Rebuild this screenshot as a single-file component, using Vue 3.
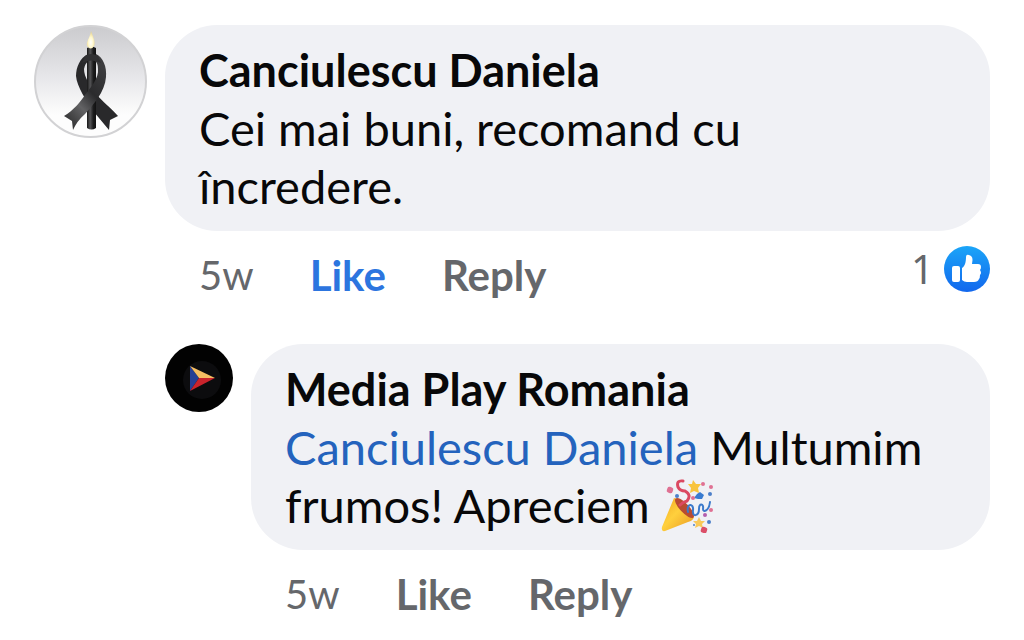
<script setup>
const first = { name: 'Canciulescu Daniela', age: '5w' }
const reply = { name: 'Media Play Romania', age: '5w' }
</script>

<template>
  <main class="thread">
    <article class="comment">
      <svg class="avatar" viewBox="0 0 113 113" role="img" aria-label="Canciulescu Daniela">
        <defs>
          <linearGradient id="backdrop" x1="0" y1="0" x2="0" y2="1">
            <stop offset="0" stop-color="#cbcbce" />
            <stop offset=".45" stop-color="#e6e6e9" />
            <stop offset=".8" stop-color="#fdfdfd" />
          </linearGradient>
          <linearGradient id="ribbon" x1="0" y1="1" x2=".6" y2="0">
            <stop offset="0" stop-color="#222" />
            <stop offset=".4" stop-color="#626264" />
            <stop offset=".65" stop-color="#2b2b2d" />
            <stop offset="1" stop-color="#3c3c3e" />
          </linearGradient>
          <linearGradient id="candle">
            <stop offset="0" stop-color="#161616" />
            <stop offset=".35" stop-color="#555557" />
            <stop offset=".7" stop-color="#1c1c1d" />
            <stop offset="1" stop-color="#111" />
          </linearGradient>
          <radialGradient id="flame" cx=".5" cy=".65" r=".6">
            <stop offset="0" stop-color="#fff" />
            <stop offset=".5" stop-color="#fff8cf" />
            <stop offset="1" stop-color="#e8d48b" />
          </radialGradient>
        </defs>
        <circle cx="56.500" cy="56.500" r="55.500" fill="url(#backdrop)" stroke="#d2d2d4" stroke-width="2" />
        <path d="M54 29C46 33 42 42 42 51C43 62 52 75 60 87L75 105L76 95L84 91C76 82 68 76 63 70C56 61 50 52 50 44Q51 38 55 36Z" fill="#29292b" />
        <path d="M53 23Q57.500 20 62 23V103Q57.500 106 53 103Z" fill="url(#candle)" />
        <path d="M62 29C69 32 73 42 72 52C71 67 59 80 51 89Q43 96 39 105L38 96L30 91C40 85 46 77 51 70C57 62 65 53 64 44Q64 38 61 36Z" fill="url(#ribbon)" />
        <path d="M51 31Q57 27 64 31L67 38Q57 33 48 38Z" fill="#303032" />
        <path d="M57 6C59 12 62 17 60 21Q57 26 53 21C52 16 56 13 57 6Z" fill="url(#flame)" />
      </svg>
      <div class="body">
        <div class="bubble">
          <h2>{{ first.name }}</h2>
          <p>Cei mai buni, recomand cu încredere.</p>
        </div>
        <footer class="actions">
          <time>{{ first.age }}</time>
          <button type="button" class="liked">Like</button>
          <button type="button">Reply</button>
          <span class="reactions">
            <span>1</span>
            <svg class="thumb" viewBox="0 0 46 46" role="img" aria-label="Like">
              <defs>
                <linearGradient id="blue" x1="0" y1="0" x2="0" y2="1">
                  <stop offset="0" stop-color="#1ba5f8" />
                  <stop offset="1" stop-color="#1267ed" />
                </linearGradient>
              </defs>
              <circle cx="23" cy="23" r="23" fill="url(#blue)" />
              <rect x="8" y="20" width="8" height="16" rx="2" fill="#fff" />
              <path d="M18 22C21 20 22 16 22 11Q22 8 25 9Q30 10 28 18H34Q37 18 37 21Q37 23 36 24Q38 27 36 29Q36 32 35 33Q34 36 30 36H23Q20 36 18 34Z" fill="#fff" />
            </svg>
          </span>
        </footer>
      </div>
    </article>

    <article class="comment nested">
      <svg class="avatar small" viewBox="0 0 68 68" role="img" aria-label="Media Play Romania">
        <circle cx="34" cy="34" r="34" fill="#020202" />
        <circle cx="37" cy="36" r="19" fill="#0c0c0e" />
        <path d="M25 22L34 34L25 47Z" fill="#263f94" />
        <path d="M25 22L50 34H34Z" fill="#f6bd62" />
        <path d="M34 34H50L25 47Z" fill="#c9232c" />
      </svg>
      <div class="body">
        <div class="bubble">
          <h2>{{ reply.name }}</h2>
          <p>
            <a href="#">Canciulescu Daniela</a> Multumim frumos! Apreciem
            <svg class="party" viewBox="0 0 54 54" role="img" aria-label="Party popper">
              <defs>
                <linearGradient id="cone" x1="0" y1="0" x2="1" y2="1">
                  <stop offset="0" stop-color="#f0a520" />
                  <stop offset=".45" stop-color="#ffd03d" />
                  <stop offset="1" stop-color="#e99721" />
                </linearGradient>
              </defs>
              <path d="M14 19Q25 21 34 38Q33 42 28 43L5 52Q1 53 2 48Z" fill="url(#cone)" />
              <ellipse cx="24.500" cy="29" rx="4.500" ry="13" transform="rotate(-43 24.500 29)" fill="#b84b31" />
              <path d="M23 2Q16 1 18 8Q20 12 25 12Q32 16 27 22Q23 23 20 26" fill="none" stroke="#db4961" stroke-width="3" stroke-linecap="round" />
              <path d="M28 33C26 24 34 24 33 31C32 39 39 37 39 30C39 24 44 24 43 30C43 34 49 32 50 23" fill="none" stroke="#3c7acb" stroke-width="2" stroke-linecap="round" />
              <path d="M33 1L36 5L41 5L38 9L39 14L34 12L30 14L31 9L28 5L32 5Z" fill="#f8c43c" />
              <path d="M39 38L41 42L45 42L42 45L43 49L39 47L35 49L36 45L33 42L37 42Z" fill="#f8c95a" />
              <path d="M37 15L40 13L44 16L42 20L38 20L34 19Z" fill="#397bd0" />
              <g fill="#df7193">
                <rect x="7" y="8" width="6" height="6" rx="2" transform="rotate(20 10 11)" />
                <circle cx="43" cy="5" r="2" /><circle cx="51" cy="8" r="2" />
                <circle cx="51" cy="31" r="2" /><circle cx="33" cy="19" r="2" />
              </g>
              <rect x="41" y="48" width="6" height="6" rx="2" transform="rotate(18 44 51)" fill="#db4f68" />
              <g fill="#4d80c9">
                <circle cx="17" cy="17" r="2" /><circle cx="50" cy="15" r="2" />
                <circle cx="49" cy="43" r="2" /><circle cx="34" cy="46" r="1" />
              </g>
              <circle cx="45" cy="36" r="2" fill="#b35fae" />
            </svg>
          </p>
        </div>
        <footer class="actions">
          <time>{{ reply.age }}</time>
          <button type="button">Like</button>
          <button type="button">Reply</button>
        </footer>
      </div>
    </article>
  </main>
</template>

<style>
body {
  margin: 0;
  background: #fff;
}
</style>

<style scoped>
.thread {
  display: flex;
  flex-direction: column;
  gap: 25px;
  padding: 25px 34px 0;
  font-family: Lato, "Noto Sans", sans-serif;
  color: #080809;
}
.comment {
  display: flex;
  align-items: flex-start;
  gap: 18px;
}
.nested {
  margin-left: 131px;
}
.avatar {
  flex: none;
  width: 113px;
  height: 113px;
}
.small {
  width: 68px;
  height: 68px;
}
.body {
  flex: 1;
  min-width: 0;
}
.bubble {
  padding: 16px 52px 16px 34px;
  border-radius: 52px;
  background: #f0f1f5;
}
h2,
p {
  margin: 0;
  font-size: 47px;
  line-height: 58px;
}
h2 {
  font-size: 45px;
  font-weight: 700;
}
p {
  font-weight: 400;
}
a {
  color: #2463bd;
  text-decoration: none;
}
.party {
  width: 54px;
  height: 54px;
  margin-left: -2px;
  vertical-align: -10px;
}
.actions {
  display: flex;
  align-items: center;
  gap: 56px;
  height: 88px;
  padding-left: 34px;
  color: #65676b;
  font-size: 40px;
  line-height: 48px;
}
button {
  padding: 0;
  border: 0;
  background: none;
  color: inherit;
  font: inherit;
  font-size: 42px;
  font-weight: 700;
  cursor: pointer;
}
.liked {
  color: #2c75df;
}
.reactions {
  display: flex;
  align-items: center;
  gap: 10px;
  margin-left: auto;
  padding-bottom: 12px;
  font-family: "Noto Sans", sans-serif;
}
.thumb {
  width: 46px;
  height: 46px;
}
</style>
